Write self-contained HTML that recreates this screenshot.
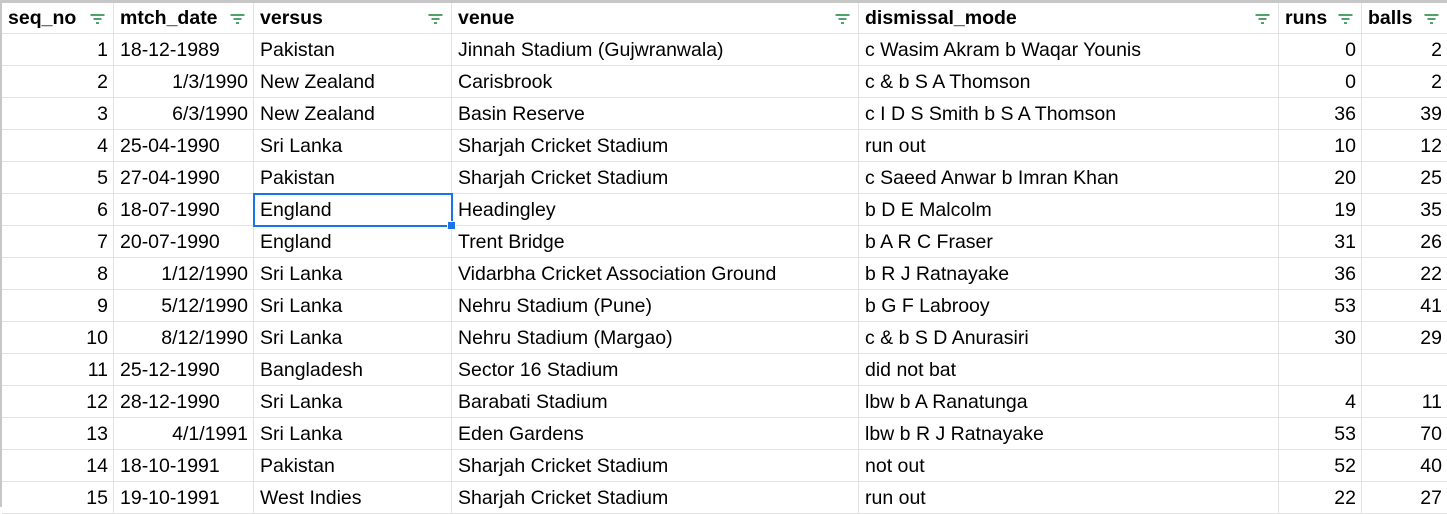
<!DOCTYPE html><html><head><style>
body{margin:0;width:1447px;height:507px;overflow:hidden;background:#fff;font-family:"Liberation Sans",Arial,sans-serif;}
.wrap{position:absolute;left:0;top:0;width:1447px;height:507px;border-top:3px solid #c7c7c7;border-left:2px solid #c7c7c7;box-sizing:border-box;}
.g{display:grid;grid-template-columns:112px 140px 198px 407px 420px 83px 86px;grid-auto-rows:32px;grid-template-rows:31px;}
.g div{border-right:1px solid #e2e2e2;border-bottom:1px solid #e2e2e2;height:32px;line-height:33px;padding:0 5px 0 6px;font-size:19.5px;color:#000;white-space:nowrap;overflow:hidden;box-sizing:border-box;position:relative;}
.g div.h{font-weight:bold;height:31px;line-height:31px;}
.g div.r{text-align:right;}
.f{position:absolute;right:8px;top:11px;width:15px;height:10px;}
.sel{position:absolute;left:251px;top:190px;width:200px;height:34px;border:2px solid #1a73e8;box-sizing:border-box;}
.hd{position:absolute;left:445px;top:218px;width:7px;height:7px;background:#1a73e8;border:1px solid #fff;}
</style></head><body><div class="wrap">
<div class="g">
<div class="h">seq_no<svg class="f" viewBox="0 0 14 10"><path d="M0 1h14M3 5h8M5.5 9h3" stroke="#188038" stroke-width="1.6"/></svg></div><div class="h">mtch_date<svg class="f" viewBox="0 0 14 10"><path d="M0 1h14M3 5h8M5.5 9h3" stroke="#188038" stroke-width="1.6"/></svg></div><div class="h">versus<svg class="f" viewBox="0 0 14 10"><path d="M0 1h14M3 5h8M5.5 9h3" stroke="#188038" stroke-width="1.6"/></svg></div><div class="h">venue<svg class="f" viewBox="0 0 14 10"><path d="M0 1h14M3 5h8M5.5 9h3" stroke="#188038" stroke-width="1.6"/></svg></div><div class="h">dismissal_mode<svg class="f" viewBox="0 0 14 10"><path d="M0 1h14M3 5h8M5.5 9h3" stroke="#188038" stroke-width="1.6"/></svg></div><div class="h">runs<svg class="f" viewBox="0 0 14 10"><path d="M0 1h14M3 5h8M5.5 9h3" stroke="#188038" stroke-width="1.6"/></svg></div><div class="h">balls<svg class="f" viewBox="0 0 14 10"><path d="M0 1h14M3 5h8M5.5 9h3" stroke="#188038" stroke-width="1.6"/></svg></div>
<div class="r">1</div><div>18-12-1989</div><div>Pakistan</div><div>Jinnah Stadium (Gujwranwala)</div><div>c Wasim Akram b Waqar Younis</div><div class="r">0</div><div class="r">2</div>
<div class="r">2</div><div class="r">1/3/1990</div><div>New Zealand</div><div>Carisbrook</div><div>c &amp; b S A Thomson</div><div class="r">0</div><div class="r">2</div>
<div class="r">3</div><div class="r">6/3/1990</div><div>New Zealand</div><div>Basin Reserve</div><div>c I D S Smith b S A Thomson</div><div class="r">36</div><div class="r">39</div>
<div class="r">4</div><div>25-04-1990</div><div>Sri Lanka</div><div>Sharjah Cricket Stadium</div><div>run out</div><div class="r">10</div><div class="r">12</div>
<div class="r">5</div><div>27-04-1990</div><div>Pakistan</div><div>Sharjah Cricket Stadium</div><div>c Saeed Anwar b Imran Khan</div><div class="r">20</div><div class="r">25</div>
<div class="r">6</div><div>18-07-1990</div><div>England</div><div>Headingley</div><div>b D E Malcolm</div><div class="r">19</div><div class="r">35</div>
<div class="r">7</div><div>20-07-1990</div><div>England</div><div>Trent Bridge</div><div>b A R C Fraser</div><div class="r">31</div><div class="r">26</div>
<div class="r">8</div><div class="r">1/12/1990</div><div>Sri Lanka</div><div>Vidarbha Cricket Association Ground</div><div>b R J Ratnayake</div><div class="r">36</div><div class="r">22</div>
<div class="r">9</div><div class="r">5/12/1990</div><div>Sri Lanka</div><div>Nehru Stadium (Pune)</div><div>b G F Labrooy</div><div class="r">53</div><div class="r">41</div>
<div class="r">10</div><div class="r">8/12/1990</div><div>Sri Lanka</div><div>Nehru Stadium (Margao)</div><div>c &amp; b S D Anurasiri</div><div class="r">30</div><div class="r">29</div>
<div class="r">11</div><div>25-12-1990</div><div>Bangladesh</div><div>Sector 16 Stadium</div><div>did not bat</div><div class="r"></div><div class="r"></div>
<div class="r">12</div><div>28-12-1990</div><div>Sri Lanka</div><div>Barabati Stadium</div><div>lbw b A Ranatunga</div><div class="r">4</div><div class="r">11</div>
<div class="r">13</div><div class="r">4/1/1991</div><div>Sri Lanka</div><div>Eden Gardens</div><div>lbw b R J Ratnayake</div><div class="r">53</div><div class="r">70</div>
<div class="r">14</div><div>18-10-1991</div><div>Pakistan</div><div>Sharjah Cricket Stadium</div><div>not out</div><div class="r">52</div><div class="r">40</div>
<div class="r">15</div><div>19-10-1991</div><div>West Indies</div><div>Sharjah Cricket Stadium</div><div>run out</div><div class="r">22</div><div class="r">27</div>
</div>
<div class="sel"></div><div class="hd"></div>
</div></body></html>
